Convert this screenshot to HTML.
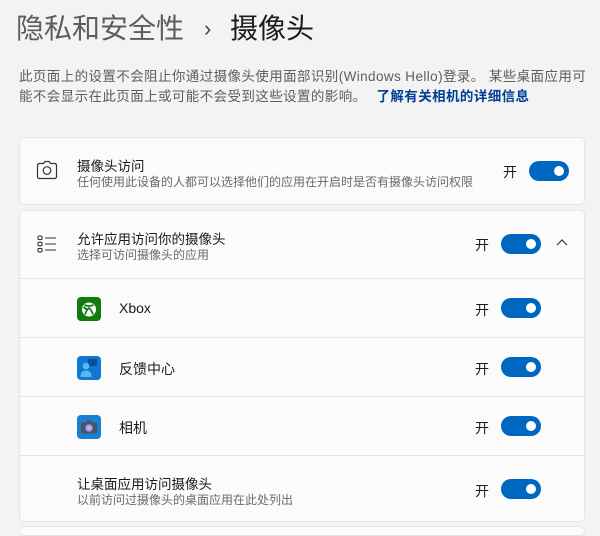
<!DOCTYPE html>
<html><head><meta charset="utf-8"><style>
*{margin:0;padding:0;box-sizing:border-box}
body{width:600px;height:527px;background:#f3f3f3;font-family:"Liberation Sans","Noto Sans CJK SC",sans-serif;color:#1b1b1b;position:relative;overflow:hidden}
.abs{position:absolute;white-space:nowrap}
.t1{left:16px;top:11px;font-size:28px;color:#5d5d5d;line-height:36px}
.arr{left:204px;top:13px;font-size:22px;color:#444;line-height:32px}
.t2{left:230px;top:11px;font-size:28px;color:#1b1b1b;line-height:36px}
.desc{left:19px;top:67px;font-size:13.5px;color:#5d5d5d;line-height:20px;letter-spacing:0.4px}
.desc a{color:#003e92;font-weight:bold;text-decoration:none;margin-left:10px}
.card{position:absolute;left:19px;width:566px;background:#fbfbfb;border:1px solid #e5e5e5;border-radius:5px}
.div{position:absolute;left:19px;width:566px;height:1px;background:#e5e5e5}
.tt{font-size:13.5px;color:#1b1b1b}
.st{font-size:12px;color:#6a6a6a}
.on{font-size:14px;color:#1b1b1b}
.tg{position:absolute;width:40px;height:20px;border-radius:10px;background:#0067c0}
.tg:after{content:"";position:absolute;right:5px;top:5px;width:10px;height:10px;border-radius:50%;background:#fff}
.ic{position:absolute;width:24px;height:24px;border-radius:4px}
</style></head><body>
<div class="abs t1">隐私和安全性</div>
<div class="abs arr">›</div>
<div class="abs t2">摄像头</div>
<div class="abs desc">此页面上的设置不会阻止你通过摄像头使用面部识别(Windows Hello)登录。 某些桌面应用可<br>能不会显示在此页面上或可能不会受到这些设置的影响。<a>了解有关相机的详细信息</a></div>

<div class="card" style="top:137px;height:68px"></div>
<svg class="abs" style="left:36px;top:160px" width="22" height="20" viewBox="0 0 22 20"><path d="M7.5 3.5 L9 1.5 H13 L14.5 3.5 H18.5 Q20.5 3.5 20.5 5.5 V16.5 Q20.5 18.5 18.5 18.5 H3.5 Q1.5 18.5 1.5 16.5 V5.5 Q1.5 3.5 3.5 3.5 Z" fill="none" stroke="#333" stroke-width="1.2"/><circle cx="11" cy="10.5" r="3.8" fill="none" stroke="#333" stroke-width="1.2"/></svg>
<div class="abs tt" style="left:77px;top:155px">摄像头访问</div>
<div class="abs st" style="left:77px;top:173px">任何使用此设备的人都可以选择他们的应用在开启时是否有摄像头访问权限</div>
<div class="abs on" style="left:503px;top:162px">开</div>
<div class="tg" style="left:529px;top:161px"></div>

<div class="card" style="top:210px;height:312px"></div>
<svg class="abs" style="left:37px;top:235px" width="20" height="18" viewBox="0 0 20 18"><g fill="none" stroke="#333" stroke-width="1.1"><rect x="1" y="1" width="4" height="3.5" rx="1"/><rect x="1" y="7.2" width="4" height="3.5" rx="1"/><rect x="1" y="13.4" width="4" height="3.5" rx="1"/><path d="M8 3H19M8 9H19M8 15H19"/></g></svg>
<div class="abs tt" style="left:77px;top:228px">允许应用访问你的摄像头</div>
<div class="abs st" style="left:77px;top:246px">选择可访问摄像头的应用</div>
<div class="abs on" style="left:475px;top:235px">开</div>
<div class="tg" style="left:501px;top:234px"></div>
<svg class="abs" style="left:555px;top:238px" width="14" height="10" viewBox="0 0 14 10"><path d="M2 7 L7 2 L12 7" fill="none" stroke="#333" stroke-width="1.2"/></svg>

<div class="div" style="top:278px"></div>
<div class="ic" style="left:77px;top:297px;background:#107c10"></div>
<svg class="abs" style="left:77px;top:297px" width="24" height="24" viewBox="0 0 24 24"><circle cx="12" cy="12.5" r="7" fill="#fff"/><path d="M7.5 8 Q12 10 16.5 8 M8 17.5 Q10 12 12 11 Q14 12 16 17.5 M6.5 10 Q9 12 10.5 13" fill="none" stroke="#107c10" stroke-width="1.8"/></svg>
<div class="abs on" style="left:119px;top:300px">Xbox</div>
<div class="abs on" style="left:475px;top:300px">开</div>
<div class="tg" style="left:501px;top:298px"></div>

<div class="div" style="top:337px"></div>
<div class="ic" style="left:77px;top:356px;background:#0f78d4"></div>
<svg class="abs" style="left:77px;top:356px" width="24" height="24" viewBox="0 0 24 24"><rect x="11" y="3" width="9" height="7" rx="1" fill="#0a4f9e"/><circle cx="9" cy="10" r="3.3" fill="#5cb8f0"/><path d="M3.5 21 Q3.5 14.5 9 14.5 Q14.5 14.5 14.5 21Z" fill="#5cb8f0"/></svg>
<div class="abs on" style="left:119px;top:359px">反馈中心</div>
<div class="abs on" style="left:475px;top:359px">开</div>
<div class="tg" style="left:501px;top:357px"></div>

<div class="div" style="top:396px"></div>
<div class="ic" style="left:77px;top:415px;background:#1a7fd4"></div>
<svg class="abs" style="left:77px;top:415px" width="24" height="24" viewBox="0 0 24 24"><rect x="4" y="7.5" width="16" height="11" rx="2" fill="#4a5560"/><rect x="9" y="5.5" width="6" height="3" rx="1" fill="#4a5560"/><circle cx="12" cy="13" r="3.8" fill="#b48be8"/><circle cx="12" cy="13" r="2" fill="#8fc6ff"/></svg>
<div class="abs on" style="left:119px;top:418px">相机</div>
<div class="abs on" style="left:475px;top:418px">开</div>
<div class="tg" style="left:501px;top:416px"></div>

<div class="div" style="top:455px"></div>
<div class="abs tt" style="left:77px;top:473px">让桌面应用访问摄像头</div>
<div class="abs st" style="left:77px;top:491px">以前访问过摄像头的桌面应用在此处列出</div>
<div class="abs on" style="left:475px;top:481px">开</div>
<div class="tg" style="left:501px;top:479px"></div>
<div class="card" style="top:526px;height:10px"></div>
</body></html>
